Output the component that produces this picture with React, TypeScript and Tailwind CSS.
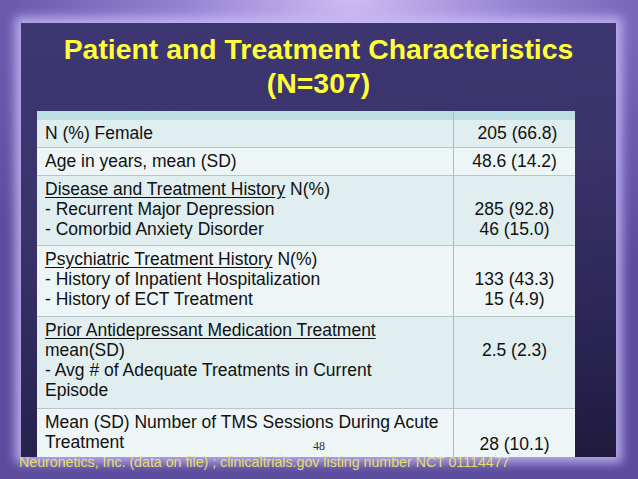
import React from "react";

const font = { fontFamily: '"Liberation Sans", Arial, sans-serif' };

type Row = {
  h: string;
  bg: string;
  left: React.ReactNode;
  right: React.ReactNode;
};

export default function App() {
  const rows: Row[] = [
    {
      h: "h-[27px]",
      bg: "bg-[#e0eef0]",
      left: <div>N (%) Female</div>,
      right: <div className="pl-[6px]">205 (66.8)</div>,
    },
    {
      h: "h-[28px]",
      bg: "bg-[#eef5f6]",
      left: <div>Age in years, mean (SD)</div>,
      right: <div>48.6 (14.2)</div>,
    },
    {
      h: "h-[70px]",
      bg: "bg-[#e0eef0]",
      left: (
        <>
          <div>
            <span className="underline underline-offset-[2px]">Disease and Treatment History</span> N(%)
          </div>
          <div>- Recurrent Major Depression</div>
          <div>- Comorbid Anxiety Disorder</div>
        </>
      ),
      right: (
        <>
          <div>&nbsp;</div>
          <div>285 (92.8)</div>
          <div>46 (15.0)</div>
        </>
      ),
    },
    {
      h: "h-[71px]",
      bg: "bg-[#eef5f6]",
      left: (
        <>
          <div>
            <span className="underline underline-offset-[2px]">Psychiatric Treatment History</span> N(%)
          </div>
          <div>- History of Inpatient Hospitalization</div>
          <div>- History of ECT Treatment</div>
        </>
      ),
      right: (
        <>
          <div>&nbsp;</div>
          <div>133 (43.3)</div>
          <div>15 (4.9)</div>
        </>
      ),
    },
    {
      h: "h-[92px]",
      bg: "bg-[#e0eef0]",
      left: (
        <>
          <div>
            <span className="underline underline-offset-[2px]">Prior Antidepressant Medication Treatment</span>
          </div>
          <div>mean(SD)</div>
          <div>- Avg # of Adequate Treatments in Current</div>
          <div>Episode</div>
        </>
      ),
      right: (
        <>
          <div>&nbsp;</div>
          <div>2.5 (2.3)</div>
        </>
      ),
    },
    {
      h: "h-[52px]",
      bg: "bg-[#eef5f6]",
      left: (
        <>
          <div>Mean (SD) Number of TMS Sessions During Acute</div>
          <div>Treatment</div>
        </>
      ),
      right: (
        <>
          <div>&nbsp;</div>
          <div className="pt-[2px]">28 (10.1)</div>
        </>
      ),
    },
  ];

  return (
    <div
      className="relative w-[638px] h-[479px] overflow-hidden bg-[radial-gradient(ellipse_75%_70%_at_55%_0%,#cdbcf3_0%,#9583d2_35%,#6c5cae_70%,#5a4b9c_100%)] pt-[23px]"
      style={font}
    >
      <div className="ml-[21px] w-[595px] h-[434px] overflow-hidden bg-[linear-gradient(172deg,#3d3672_0%,#3b336b_40%,#2b2554_75%,#1f1a3d_100%)] shadow-[0_0_10px_6px_rgba(200,186,248,0.85)] pt-[9px]">
        <div className="text-center text-[28.4px] leading-[34px] font-bold text-[#ffff3a]">
          <div>Patient and Treatment Characteristics</div>
          <div>(N=307)</div>
        </div>
        <div className="ml-[16px] mt-[11px] w-[538px] text-[17.5px] leading-[20px] text-[#111]">
          <div className="h-[9px] bg-[#bbdfe3] flex">
            <div className="w-[416px]" />
            <div className="flex-1 border-l border-[#a9bcc2]" />
          </div>
          {rows.map((r, i) => (
            <div
              key={i}
              className={`flex ${r.h} ${r.bg} ${i > 0 ? "border-t border-[#b7c6cb]" : ""}`}
            >
              <div className="w-[416px] pl-[8px] pt-[3px] whitespace-nowrap">{r.left}</div>
              <div className="flex-1 border-l border-[#a9bcc2] pt-[3px] text-center whitespace-nowrap">
                {r.right}
              </div>
            </div>
          ))}
        </div>
      </div>
      <div className="-mt-[3px] ml-[19px] text-[14.2px] leading-[16px] text-[#e4df68] whitespace-nowrap">
        Neuronetics, Inc. (data on file) ; clinicaltrials.gov listing number NCT 01114477
      </div>
      <div
        className="absolute left-[313px] top-[439px] text-[12px] leading-[14px] text-[#333]"
        style={{ fontFamily: '"Liberation Serif", "Times New Roman", serif' }}
      >
        48
      </div>
    </div>
  );
}
